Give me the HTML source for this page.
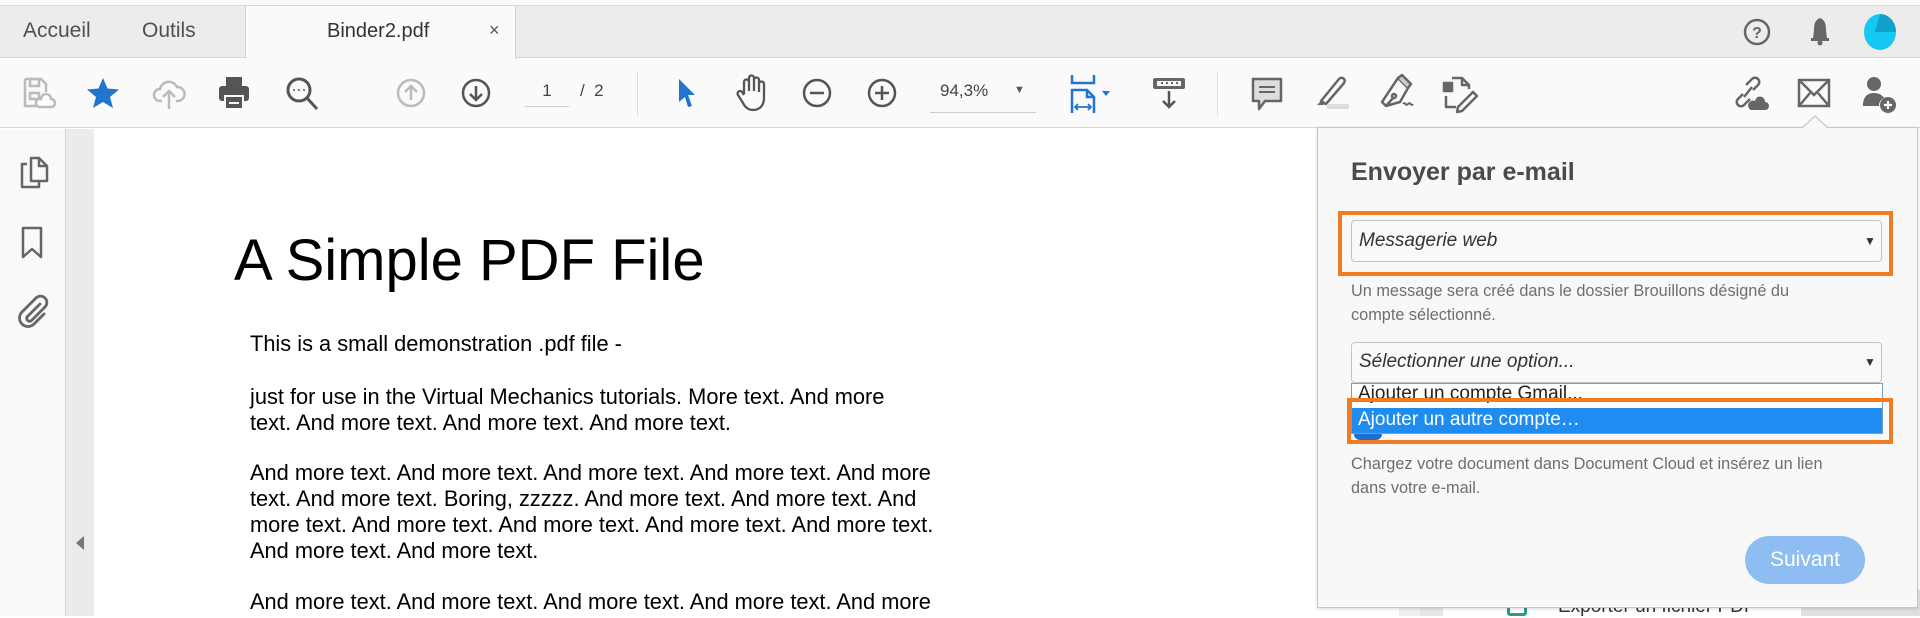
<!DOCTYPE html>
<html><head><meta charset="utf-8"><style>
*{margin:0;padding:0;box-sizing:border-box}
body{width:1920px;height:616px;overflow:hidden;background:#fff;font-family:"Liberation Sans",sans-serif;position:relative}
.a{position:absolute}
.tb{color:#505050;font-size:21px}
svg.i{position:absolute;overflow:visible}
.pt{position:absolute;left:250px;font-size:21.8px;color:#000;white-space:nowrap;line-height:26px}
.help{position:absolute;left:1351px;font-size:16.3px;color:#6e6e6e;white-space:nowrap;line-height:24px}
</style></head><body>
<div class="a" style="left:0;top:0;width:1920px;height:6px;background:#fafafa;border-bottom:1px solid #d8d8d8"></div>
<div class="a" style="left:0;top:6px;width:1920px;height:52px;background:#ececec;border-bottom:1px solid #d4d4d4"></div>
<div class="a" style="left:245px;top:6px;width:271px;height:53px;background:#fafafa;border-left:1px solid #d4d4d4;border-right:1px solid #d4d4d4"></div>
<div class="a tb" style="left:23px;top:19px">Accueil</div>
<div class="a tb" style="left:142px;top:19px">Outils</div>
<div class="a tb" style="left:327px;top:20px;font-size:20px;color:#333">Binder2.pdf</div>
<div class="a" style="left:489px;top:20px;font-size:18px;color:#555">×</div>
<svg class="i" style="left:1743px;top:18px" width="28" height="28"><circle cx="14" cy="14" r="12" fill="none" stroke="#666" stroke-width="2.5"/><text x="14" y="20" font-size="16" font-weight="bold" text-anchor="middle" fill="#666" font-family="Liberation Sans">?</text></svg>
<svg class="i" style="left:1808px;top:16px" width="24" height="30"><path d="M12 2 C7 4 6 8 6 14 L5 23 L19 23 L18 14 C18 8 17 4 12 2Z" fill="#666"/><rect x="3" y="22" width="18" height="3" fill="#666"/><circle cx="12" cy="27" r="2.5" fill="#666"/></svg>
<svg class="i" style="left:1863px;top:13px" width="34" height="38"><ellipse cx="17" cy="19" rx="16" ry="18" fill="#15c8f2"/><path d="M17 1 A16 18 0 0 1 33 19 L12 19Z" fill="#0fa0cc"/></svg>
<div class="a" style="left:0;top:59px;width:1920px;height:69px;background:#fafafa;border-bottom:1px solid #d6d6d6"></div>
<svg class="i" style="left:22px;top:76px" width="32" height="34" fill="none" stroke="#bbb" stroke-width="2.5"><path d="M3 3 H19 L24 8 V16 M3 3 V30 H14"/><rect x="8" y="3" width="9" height="7"/><rect x="8" y="17" width="9" height="6"/><path d="M17 31 h12 a4 4 0 0 0 0 -8 a5 5 0 0 0 -10 0 a4 4 0 0 0 -2 8z" fill="#fff"/></svg>
<svg class="i" style="left:86px;top:76px" width="34" height="34"><path d="M17 2 L21.5 12.5 L33 13.5 L24 21 L27 32 L17 26 L7 32 L10 21 L1 13.5 L12.5 12.5Z" fill="#2274d0"/></svg>
<svg class="i" style="left:152px;top:76px" width="34" height="34" fill="none" stroke="#bbb" stroke-width="2.5"><path d="M10 25 H8 a6 6 0 0 1 0 -12 a9 9 0 0 1 17 -2 a7 7 0 0 1 1 14 h-2"/><path d="M17 33 V15 M11 21 L17 15 L23 21"/></svg>
<svg class="i" style="left:218px;top:76px" width="32" height="34"><rect x="8" y="1" width="16" height="9" fill="#555"/><rect x="1" y="10" width="30" height="15" rx="3" fill="#555"/><rect x="7" y="20" width="18" height="13" fill="#555" stroke="#fafafa" stroke-width="2"/><rect x="11" y="26" width="10" height="2" fill="#fafafa"/></svg>
<svg class="i" style="left:285px;top:76px" width="34" height="36" fill="none" stroke="#555" stroke-width="3"><circle cx="14" cy="14" r="11"/><path d="M22 22 L32 33"/><circle cx="9" cy="14" r="1" fill="#555" stroke="none"/><circle cx="14" cy="14" r="1" fill="#555" stroke="none"/><circle cx="19" cy="14" r="1" fill="#555" stroke="none"/></svg>
<svg class="i" style="left:396px;top:78px" width="30" height="30" fill="none" stroke="#bbb" stroke-width="2.5"><circle cx="15" cy="15" r="13"/><path d="M15 22 V8 M9 14 L15 8 L21 14"/></svg>
<svg class="i" style="left:461px;top:78px" width="30" height="30" fill="none" stroke="#555" stroke-width="2.5"><circle cx="15" cy="15" r="13"/><path d="M15 8 V22 M9 16 L15 22 L21 16"/></svg>
<div class="a" style="left:525px;top:81px;width:44px;text-align:center;font-size:17px;color:#444">1</div>
<div class="a" style="left:525px;top:106px;width:44px;height:1px;background:#ccc"></div>
<div class="a" style="left:580px;top:81px;font-size:17px;color:#444">/&nbsp;&nbsp;2</div>
<div class="a" style="left:637px;top:72px;width:1px;height:44px;background:#ddd"></div>
<svg class="i" style="left:676px;top:77px" width="22" height="32"><path d="M3 2 L19 18 L12 18 L16 29 L12 30 L9 20 L3 25Z" fill="#2274d0"/></svg>
<svg class="i" style="left:735px;top:74px" width="34" height="38" fill="none" stroke="#555" stroke-width="2.3" stroke-linejoin="round"><path d="M9 20 V8 a2.5 2.5 0 0 1 5 0 V17 M14 17 V4 a2.5 2.5 0 0 1 5 0 V17 M19 17 V6 a2.5 2.5 0 0 1 5 0 V18 M24 18 V10 a2.5 2.5 0 0 1 5 0 V24 c0 7 -4 12 -11 12 c-5 0 -8 -3 -10 -7 l-5 -8 a2.5 2.5 0 0 1 4 -3 l2 3"/></svg>
<svg class="i" style="left:802px;top:78px" width="30" height="30" fill="none" stroke="#555" stroke-width="2.5"><circle cx="15" cy="15" r="13"/><path d="M8 15 H22"/></svg>
<svg class="i" style="left:867px;top:78px" width="30" height="30" fill="none" stroke="#555" stroke-width="2.5"><circle cx="15" cy="15" r="13"/><path d="M8 15 H22 M15 8 V22"/></svg>
<div class="a" style="left:940px;top:81px;font-size:17px;color:#444">94,3%</div>
<div class="a" style="left:1014px;top:84px;font-size:11px;color:#555">▼</div>
<div class="a" style="left:930px;top:112px;width:106px;height:1px;background:#ccc"></div>
<svg class="i" style="left:1070px;top:74px" width="50" height="40" fill="none" stroke="#2274d0" stroke-width="2.5"><path d="M2 1 V9 H24 V1"/><path d="M2 39 V16 H17 L24 23 V39"/><path d="M17 16 V23 H24"/><path d="M5 33 H21 M8 30 L5 33 L8 36 M18 30 L21 33 L18 36" stroke-width="1.8"/><path d="M32 17 L40 17 L36 22Z" fill="#2274d0" stroke="none"/></svg>
<svg class="i" style="left:1152px;top:76px" width="34" height="34"><rect x="1" y="2" width="32" height="11" rx="2" fill="#666"/><rect x="5" y="5" width="24" height="5" fill="#fafafa"/><path d="M9 7h2M14 7h2M19 7h2M24 7h2" stroke="#666" stroke-width="2"/><path d="M17 15 V31 M11 25 L17 31 L23 25" fill="none" stroke="#555" stroke-width="2.5"/></svg>
<div class="a" style="left:1217px;top:72px;width:1px;height:44px;background:#ddd"></div>
<svg class="i" style="left:1251px;top:77px" width="32" height="34"><path d="M2 2 H30 V24 H14 L8 32 V24 H2Z" fill="#ddd" stroke="#666" stroke-width="2.5" stroke-linejoin="round"/><path d="M8 10 H24 M8 15 H24" stroke="#666" stroke-width="2"/></svg>
<svg class="i" style="left:1313px;top:75px" width="38" height="36"><path d="M8 26 L26 4 a3 3 0 0 1 5 4 L13 29Z" fill="none" stroke="#666" stroke-width="2.5" stroke-linejoin="round"/><path d="M8 26 L4 30 L10 30 L13 29" fill="#666"/><rect x="14" y="29" width="22" height="5" fill="#ddd"/></svg>
<svg class="i" style="left:1378px;top:74px" width="38" height="38" fill="none" stroke="#666" stroke-width="2.5" stroke-linejoin="round"><path d="M20 4 L30 14 L22 28 L8 32 L4 28 Z"/><path d="M8 32 L15 24"/><circle cx="16" cy="22" r="2"/><path d="M20 4 L24 1 L33 10 L30 14" fill="#ccc"/><path d="M25 30 c2 -3 3 3 5 0 c2 -3 3 3 5 0" stroke-width="2"/></svg>
<svg class="i" style="left:1442px;top:74px" width="38" height="38" fill="none" stroke="#666" stroke-width="2.5" stroke-linejoin="round"><rect x="2" y="9" width="8" height="8" fill="#666"/><path d="M10 4 H20 L27 11 V15"/><path d="M20 4 V11 H27"/><path d="M4 22 V33 H14"/><path d="M16 33 L31 18 L35 22 L20 37 L15 38Z"/></svg>
<svg class="i" style="left:1729px;top:74px" width="38" height="38"><g fill="none" stroke="#666" stroke-width="2.5"><path d="M14 20 L9 25 a4 4 0 0 0 6 6 L21 25 M24 16 L29 11 a4 4 0 0 0 -6 -6 L17 11"/><path d="M15 23 L23 13"/></g><path d="M22 36 h14 a4 4 0 0 0 0 -8 a5 5 0 0 0 -10 -1 a4 4 0 0 0 -4 9z" fill="#666"/></svg>
<svg class="i" style="left:1797px;top:78px" width="34" height="30" fill="none" stroke="#666" stroke-width="2.5"><rect x="2" y="2" width="30" height="26"/><path d="M2 2 L17 17 L32 2 M2 28 L13 15 M32 28 L21 15"/></svg>
<svg class="i" style="left:1861px;top:74px" width="36" height="40"><circle cx="13" cy="10" r="7" fill="#666"/><path d="M2 32 c0 -9 4 -13 11 -13 c5 0 8 2 10 5 a8 8 0 0 0 -5 8Z" fill="#666"/><circle cx="27" cy="31" r="8" fill="#666"/><path d="M23 31 H31 M27 27 V35" stroke="#fff" stroke-width="2.2"/></svg>
<div class="a" style="left:0;top:129px;width:66px;height:487px;background:#f9f9f9;border-right:1px solid #d4d4d4"></div>
<div class="a" style="left:66px;top:129px;width:28px;height:487px;background:#ebebeb"></div>
<svg class="i" style="left:19px;top:156px" width="32" height="34" fill="none" stroke="#666" stroke-width="2.5" stroke-linejoin="round"><path d="M12 2 H20 L28 10 V25 H12Z"/><path d="M20 2 V10 H28"/><path d="M8 8 H3 V31 H20 V26"/></svg>
<svg class="i" style="left:20px;top:226px" width="24" height="34" fill="none" stroke="#666" stroke-width="2.5" stroke-linejoin="round"><path d="M3 2 H21 V31 L12 23 L3 31Z"/></svg>
<svg class="i" style="left:16px;top:294px" width="34" height="34" fill="none" stroke="#666" stroke-width="2.8" stroke-linecap="round"><path d="M24 10 L11 23 a3 3 0 0 0 4 4 L29 13 a6 6 0 0 0 -9 -9 L6 18 a8 8 0 0 0 12 12 L28 20"/></svg>
<svg class="i" style="left:74px;top:535px" width="12" height="16"><path d="M10 1 L2 8 L10 15Z" fill="#777"/></svg>
<div class="a" style="left:94px;top:129px;width:1305px;height:487px;background:#fff"></div>
<div class="a" style="left:234px;top:227px;font-size:58px;color:#000;white-space:nowrap">A Simple PDF File</div>
<div class="pt" style="top:331px">This is a small demonstration .pdf file -</div>
<div class="pt" style="top:384px">just for use in the Virtual Mechanics tutorials. More text. And more<br>text. And more text. And more text. And more text.</div>
<div class="pt" style="top:460px">And more text. And more text. And more text. And more text. And more<br>text. And more text. Boring, zzzzz. And more text. And more text. And<br>more text. And more text. And more text. And more text. And more text.<br>And more text. And more text.</div>
<div class="pt" style="top:589px">And more text. And more text. And more text. And more text. And more</div>
<div class="a" style="left:1399px;top:590px;width:21px;height:26px;background:#f0f0f0"></div>
<div class="a" style="left:1420px;top:590px;width:23px;height:26px;background:#e6e6e6"></div>
<div class="a" style="left:1801px;top:590px;width:119px;height:26px;background:#e0e0e0"></div>
<div class="a" style="left:1507px;top:600px;width:20px;height:16px;border:3px solid #2a9a8a;border-radius:3px"></div>
<div class="a" style="left:1558px;top:596px;font-size:19px;color:#333">Exporter un fichier PDF</div>
<div class="a" style="left:1317px;top:127px;width:601px;height:481px;background:#f8f8f8;border:1px solid #c6c6c6;box-shadow:0 1px 3px rgba(0,0,0,.15)"></div>
<svg class="i" style="left:1802px;top:115px" width="26" height="14"><path d="M0 13 L13 1 L26 13" fill="#f8f8f8" stroke="#c6c6c6" stroke-width="1.2"/></svg>
<div class="a" style="left:1351px;top:158px;font-size:25px;font-weight:bold;color:#4a4a4a">Envoyer par e-mail</div>
<div class="a" style="left:1351px;top:220px;width:531px;height:42px;border:1px solid #c4c4c4;border-radius:4px;background:#f9f9f9"></div>
<div class="a" style="left:1359px;top:230px;font-size:19px;font-style:italic;color:#333">Messagerie web</div>
<div class="a" style="left:1864px;top:234px;font-size:12px;color:#333">▼</div>
<div class="a" style="left:1338px;top:211px;width:555px;height:65px;border:4px solid #f27c22"></div>
<div class="help" style="top:279px">Un message sera créé dans le dossier Brouillons désigné du<br>compte sélectionné.</div>
<div class="a" style="left:1351px;top:342px;width:531px;height:41px;border:1px solid #c4c4c4;border-radius:4px;background:#f9f9f9"></div>
<div class="a" style="left:1359px;top:351px;font-size:19px;font-style:italic;color:#333">Sélectionner une option...</div>
<div class="a" style="left:1864px;top:355px;font-size:12px;color:#333">▼</div>
<div class="a" style="left:1351px;top:383px;width:532px;height:51px;border:1px solid #7a9cc8;background:#fff;overflow:hidden">
  <div style="position:absolute;left:6px;top:-1px;font-size:19px;color:#222;white-space:nowrap">Ajouter un compte Gmail...</div>
  <div style="position:absolute;left:0;top:24px;width:532px;height:26px;background:#1e8cf0"></div>
  <div style="position:absolute;left:6px;top:25px;font-size:19px;color:#fff;white-space:nowrap">Ajouter un autre compte…</div>
</div>
<div class="a" style="left:1354px;top:434px;width:28px;height:6px;border-radius:0 0 6px 6px;background:#1e6fd0"></div>
<div class="a" style="left:1347px;top:398px;width:546px;height:46px;border:4px solid #f27c22"></div>
<div class="help" style="top:452px">Chargez votre document dans Document Cloud et insérez un lien<br>dans votre e-mail.</div>
<div class="a" style="left:1745px;top:536px;width:120px;height:48px;border-radius:24px;background:#8dbdf1;color:#fff;font-size:21px;text-align:center;line-height:48px">Suivant</div>
</body></html>
